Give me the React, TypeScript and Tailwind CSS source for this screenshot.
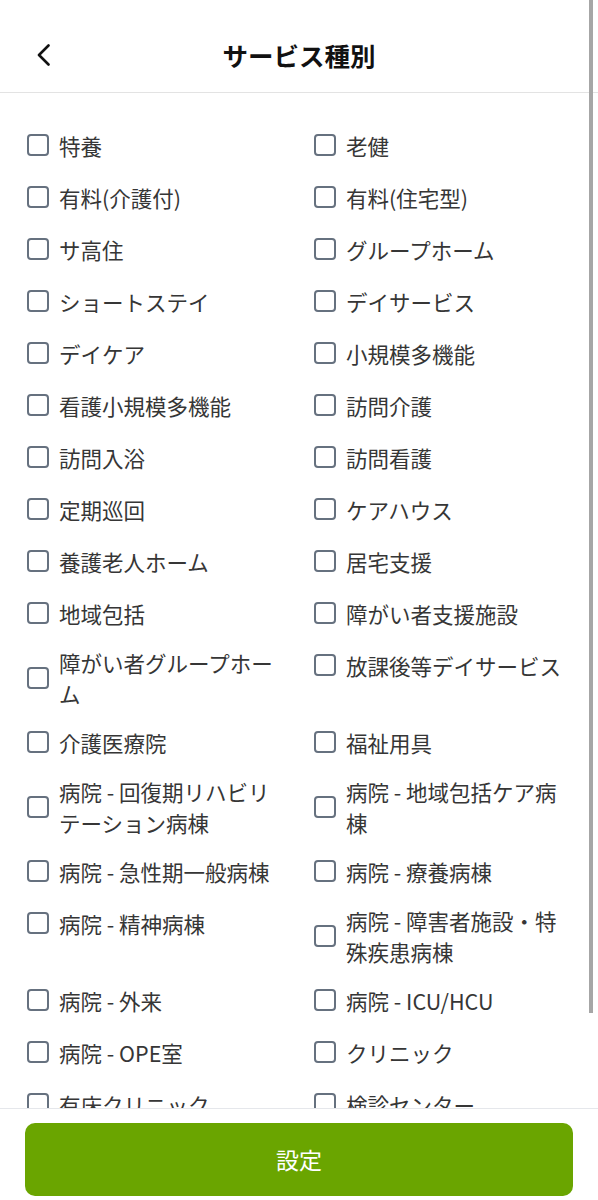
import React from "react";

const rows: [string, string][] = [
  ["特養", "老健"],
  ["有料(介護付)", "有料(住宅型)"],
  ["サ高住", "グループホーム"],
  ["ショートステイ", "デイサービス"],
  ["デイケア", "小規模多機能"],
  ["看護小規模多機能", "訪問介護"],
  ["訪問入浴", "訪問看護"],
  ["定期巡回", "ケアハウス"],
  ["養護老人ホーム", "居宅支援"],
  ["地域包括", "障がい者支援施設"],
  ["障がい者グループホーム", "放課後等デイサービス"],
  ["介護医療院", "福祉用具"],
  ["病院 - 回復期リハビリテーション病棟", "病院 - 地域包括ケア病棟"],
  ["病院 - 急性期一般病棟", "病院 - 療養病棟"],
  ["病院 - 精神病棟", "病院 - 障害者施設・特殊疾患病棟"],
  ["病院 - 外来", "病院 - ICU/HCU"],
  ["病院 - OPE室", "クリニック"],
  ["有床クリニック", "検診センター"],
  ["その他", ""],
];

function Item({ label }: { label: string }) {
  if (!label) return <div />;
  return (
    <label className="flex items-center gap-[10px] min-h-[44px]">
      <span className="shrink-0 w-[22px] h-[22px] rounded-[4px] border-2 border-[#66717f] bg-white" />
      <span className="leading-[31px] py-[3.5px] text-[21.5px] text-[#363636]">{label}</span>
    </label>
  );
}

export default function App() {
  const items = rows.flat();
  return (
    <div className="relative h-[1200px] w-full flex flex-col bg-white overflow-hidden font-['Noto_Sans_CJK_JP','Noto_Sans',sans-serif]">
      <header className="h-[93px] shrink-0 border-b border-[#e3e3e3] flex items-center pt-[18px]">
        <div className="w-[86px] pl-[37px] flex items-center">
          <svg width="13" height="22" viewBox="0 0 13 22" fill="none">
            <polyline points="11.5,1.5 2,11 11.5,20.5" stroke="#111" strokeWidth="2.6" strokeLinecap="round" strokeLinejoin="round" />
          </svg>
        </div>
        <h1 className="flex-1 text-center text-[25.5px] font-bold text-[#111111] leading-none">サービス種別</h1>
        <div className="w-[86px]" />
      </header>
      <main className="flex-1 overflow-hidden pt-[30px] px-[27px]">
        <div className="grid grid-cols-2 gap-x-[30px] gap-y-[8px] items-start">
          {items.map((l, i) => (
            <Item key={i} label={l} />
          ))}
        </div>
      </main>
      <footer className="shrink-0 border-t border-[#e5e7eb] px-[25px] pt-[14px] pb-[4px] bg-white">
        <button className="w-full h-[73px] rounded-[10px] bg-[#6aa500] text-white text-[23px] font-normal">
          設定
        </button>
      </footer>
      <div className="absolute left-[589px] top-0 w-[4px] h-[1013px] bg-[#a6a6a6]" />
    </div>
  );
}
